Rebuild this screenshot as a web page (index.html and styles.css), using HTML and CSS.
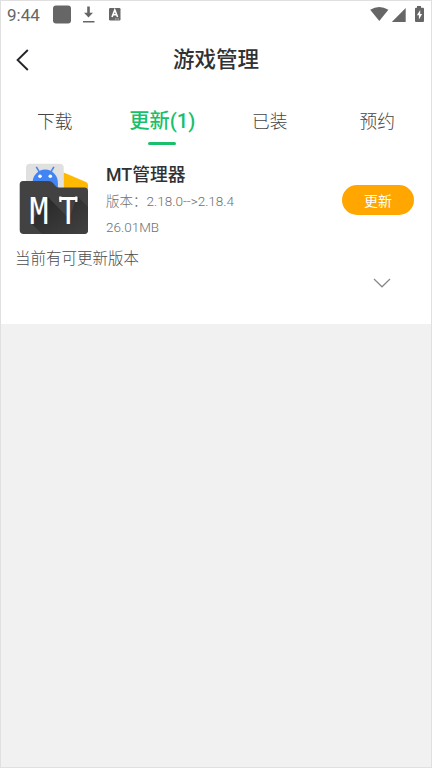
FILE: index.html
```html
<!DOCTYPE html>
<html lang="zh-CN">
<head>
<meta charset="utf-8">
<title>游戏管理</title>
<link rel="stylesheet" href="styles.css">
</head>
<body>
<div class="screen">
  <div class="panel">
    <div class="status">
      <span class="clock">9:44</span>
      <svg class="notices" width="72" height="28" viewBox="0 0 72 28" fill="#666">
        <rect x="1" y="4.500" width="18" height="18" rx="3"/>
        <path d="M35.200 5.500h2.600v6.200h3.200l-4.500 4.800-4.500-4.800h3.200zM31 20h11.500v1.500H31z"/>
        <rect x="57" y="7" width="11.500" height="12.500" rx="1.200"/>
        <path d="M60 16l2.800-7 2.800 7M61 13.800h3.600" fill="none" stroke="#fff" stroke-width="1.600"/>
        <path d="M63 18h1.500M65.500 18H67" stroke="#ddd" stroke-width=".8"/>
      </svg>
      <svg class="system" width="56" height="28" viewBox="0 0 56 28" fill="#666">
        <path d="M.2 8.800Q9.200 3.200 18.400 8.800L9.300 20z"/>
        <path d="M35.700 7V21H21.800z"/>
        <path d="M47 5h4v1.700h2q1 0 1 1v12.200q0 1-1 1h-7q-1 0-1-1V7.700q0-1 1-1h1z"/>
        <path d="M50.200 9l-3.300 5.300h2V18.500l3.200-5.400h-1.900z" fill="#fff"/>
      </svg>
    </div>
    <header class="title-bar">
      <svg class="back" width="14" height="22" viewBox="0 0 14 22" fill="none" stroke="#222529" stroke-width="1.900"><path d="M12.800 1L2.600 11l10.200 10"/></svg>
      <h1 class="title">游戏管理</h1>
    </header>
    <nav class="tabs">
      <span class="tab">下载</span>
      <span class="tab active">更新(1)</span>
      <span class="tab">已装</span>
      <span class="tab">预约</span>
    </nav>
    <div class="app">
      <svg class="app-icon" width="70" height="72" viewBox="0 0 70 72">
        <defs>
          <linearGradient id="shade" x1="0" y1="0" x2="1" y2="1"><stop offset="0" stop-color="#242424"/><stop offset="1" stop-color="#424242"/></linearGradient>
          <clipPath id="folder"><path d="M4 19h26q2 0 3.500 1.500l3.500 4q1 1 3 1h25.500q3.500 0 3.500 3.500v39q0 4-4 4H4.700q-4 0-4-4V22.500Q.7 19 4 19z"/></clipPath>
        </defs>
        <rect x="7" y="1.700" width="37.700" height="32" rx="4" fill="#e0e0e0"/>
        <path d="M44.700 10.500l22.300 9.500q2 1 2 3v5H44.700z" fill="#ffb900"/>
        <path d="M13.500 21a12.700 13.500 0 0 1 25.400 0v7H13.500z" fill="#4284f3"/>
        <path d="M17.300 4.800l4.200 7M34.900 4.800l-4.200 7" stroke="#4284f3" stroke-width="1.600"/>
        <circle cx="21" cy="14.300" r="1.800" fill="#fff"/><circle cx="31.300" cy="14.300" r="1.800" fill="#fff"/>
        <g clip-path="url(#folder)">
          <path d="M0 14h70v58H0z" fill="#424242"/>
          <path d="M28 34l37 38H23L12 61zM58 34l12 12v26H62L49 61z" fill="url(#shade)"/>
        </g>
        <text class="mark" transform="translate(10.600 61.500) scale(.83 1)">M</text>
        <text class="mark" transform="translate(39.800 61.500) scale(.83 1)">T</text>
        <path d="M40.300 34.500h2.200v5.500h-2.200zM56.200 34.500h2.200v5.500h-2.200z" fill="#fff"/>
      </svg>
      <div class="info">
        <h2 class="name">MT管理器</h2>
        <p class="meta version">版本：2.18.0--&gt;2.18.4</p>
        <p class="meta">26.01MB</p>
      </div>
      <button class="update">更新</button>
    </div>
    <p class="note">当前有可更新版本</p>
    <svg class="expand" width="18" height="10" viewBox="0 0 18 10" fill="none" stroke="#888" stroke-width="1.200"><path d="M1 1l8 7.800L17 1"/></svg>
  </div>
</div>
</body>
</html>
```

FILE: styles.css
```css
* { box-sizing: border-box; }
body {
  margin: 0;
  font-family: Roboto, "Noto Sans CJK SC", sans-serif;
  color: #666;
}
h1, h2, p { margin: 0; }
svg { display: block; flex: none; }
.screen {
  height: 768px;
  border: 1px solid #e0e0e0;
  background: #f1f1f1;
}
.panel { height: 323px; background: #fff; }
.status {
  display: flex;
  height: 28px;
  padding: 0 5px 0 6px;
}
.clock {
  width: 45px;
  font-size: 17px;
  line-height: 28px;
}
.system { margin-left: auto; }
.title-bar {
  display: grid;
  grid-template-columns: 40px 1fr 40px;
  align-items: center;
  height: 60px;
  padding-top: 2px;
}
.back { margin-left: 14px; }
.title {
  text-align: center;
  font-size: 21.5px;
  font-weight: 500;
  line-height: 32px;
  color: #303133;
}
.tabs {
  display: grid;
  grid-template-columns: repeat(4, 1fr);
  height: 57px;
  padding-top: 16px;
}
.tab {
  display: flex;
  flex-direction: column;
  align-items: center;
  font-size: 17.7px;
  font-weight: 300;
  line-height: 34px;
  color: #444;
}
.active {
  font-size: 20.3px;
  font-weight: 500;
  line-height: 32px;
  color: #19bf6b;
}
.active::after {
  content: "";
  width: 28px;
  height: 3px;
  margin-top: 5px;
  border-radius: 2px;
  background: #19bf6b;
}
.app {
  display: flex;
  height: 96px;
  padding: 16px 17px 0 18px;
}
.mark {
  font: 400 38px "DejaVu Sans Mono", monospace;
  fill: #fff;
}
.info { margin-left: 17px; }
.name {
  font-size: 17.8px;
  font-weight: 500;
  line-height: 26px;
  color: #303133;
}
.meta {
  font-size: 13.5px;
  font-weight: 300;
  line-height: 26px;
  color: #707070;
}
.update {
  width: 72px;
  height: 30px;
  margin: 23px 0 0 auto;
  padding: 1px 0 0;
  border: 0;
  border-radius: 15px;
  background: #ffa600;
  color: #fff;
  font: 400 14px/30px Roboto, "Noto Sans CJK SC", sans-serif;
}
.note {
  height: 36px;
  padding: 2px 0 0 14px;
  font-size: 15.5px;
  font-weight: 300;
  line-height: 31px;
  color: #4c4c4c;
}
.expand { margin-left: 372px; }
```
